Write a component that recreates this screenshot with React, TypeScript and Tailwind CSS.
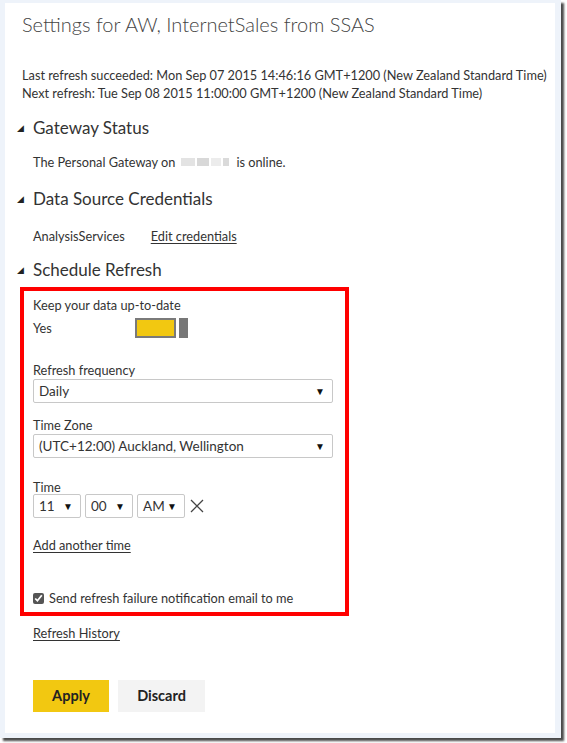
const FONT = { fontFamily: "Lato, 'Open Sans', sans-serif" };

function Heading({ children }: { children: React.ReactNode }) {
  return (
    <div className="ml-[-5px] flex items-center text-[17px] leading-[22px] text-[#333]">
      <span className="w-[16px] text-[9px] text-[#222]">◢</span>
      {children}
    </div>
  );
}

function Select({ value, className }: { value: string; className: string }) {
  return (
    <div className={`flex h-[24px] items-center justify-between rounded-[2px] border border-[#c8c8c8] bg-white pl-[5px] pr-[7px] text-[13.5px] text-[#333] ${className}`}>
      <span>{value}</span>
      <span className="text-[10px] text-[#111]">▼</span>
    </div>
  );
}

export default function App() {
  return (
    <div className="h-[743px] w-[567px] bg-white" style={FONT}>
      <div className="h-[738px] w-[561px] bg-[#eef3fa] pb-[5px] pl-[5px] pr-[6px] pt-[3px] shadow-[3px_3px_2px_#4a4a4a]">
        <div className="h-full bg-white pl-[17px] pt-[8px] text-[12.75px] text-[#333]">
          <h1 className="text-[20px] font-light leading-[26px] text-[#444]">
            Settings for AW, InternetSales from SSAS
          </h1>

          <div className="mt-[29px] leading-[18px]">
            <div>Last refresh succeeded: Mon Sep 07 2015 14:46:16 GMT+1200 (New Zealand Standard Time)</div>
            <div>Next refresh: Tue Sep 08 2015 11:00:00 GMT+1200 (New Zealand Standard Time)</div>
          </div>

          <div className="mt-[15px]">
            <Heading>Gateway Status</Heading>
          </div>
          <div className="mt-[14px] flex items-center pl-[11px] leading-[18px]">
            The Personal Gateway on
            <span className="ml-[6px] mr-[5px] inline-flex h-[8px] w-[50px] gap-[2px]">
              <span className="w-[14px] bg-[#e3e3e3]" />
              <span className="w-[12px] bg-[#d8d8d8]" />
              <span className="w-[10px] bg-[#ececec]" />
              <span className="w-[6px] bg-[#dadada]" />
            </span>
            is online.
          </div>

          <div className="mt-[17px]">
            <Heading>Data Source Credentials</Heading>
          </div>
          <div className="mt-[17px] flex gap-[26px] pl-[11px] leading-[18px]">
            <span>AnalysisServices</span>
            <span className="underline underline-offset-2">Edit credentials</span>
          </div>

          <div className="mt-[14px]">
            <Heading>Schedule Refresh</Heading>
          </div>

          <div className="ml-[-2px] mt-[6px] w-[329px] border-[4px] border-[#ff0000] pb-[5px] pl-[9px] pt-[5px]">
            <div className="leading-[18px]">Keep your data up-to-date</div>
            <div className="mt-[4px] flex items-center leading-[18px]">
              <span className="w-[102px]">Yes</span>
              <span className="flex items-center gap-[3px]">
                <span className="h-[20px] w-[41px] border-[2px] border-[#7a7a7a] bg-[#f2c811]" />
                <span className="h-[20px] w-[9px] bg-[#777]" />
              </span>
            </div>

            <div className="mt-[23px] leading-[18px]">Refresh frequency</div>
            <Select value="Daily" className="w-[300px]" />

            <div className="mt-[14px] leading-[17px]">Time Zone</div>
            <Select value="(UTC+12:00) Auckland, Wellington" className="w-[300px]" />

            <div className="mt-[22px] leading-[14px]">Time</div>
            <div className="flex items-center gap-[4px]">
              <Select value="11" className="w-[48px]" />
              <Select value="00" className="w-[48px]" />
              <Select value="AM" className="w-[48px]" />
              <svg width="14" height="14" viewBox="0 0 14 14" className="ml-[1px]">
                <path d="M1 1L13 13M13 1L1 13" stroke="#444" strokeWidth="1.3" />
              </svg>
            </div>

            <div className="mt-[18px] leading-[18px] underline underline-offset-2">Add another time</div>

            <div className="mt-[35px] flex items-center gap-[5px] leading-[18px]">
              <input type="checkbox" defaultChecked className="h-[11px] w-[11px] accent-[#555]" />
              <span>Send refresh failure notification email to me</span>
            </div>
          </div>

          <div className="mt-[8px] pl-[11px] leading-[18px] underline underline-offset-2">Refresh History</div>

          <div className="mt-[38px] flex gap-[9px] pl-[11px]">
            <button className="h-[32px] w-[76px] bg-[#f2c811] text-[14.5px] font-bold text-[#222]">Apply</button>
            <button className="h-[32px] w-[87px] bg-[#f3f3f3] text-[14.5px] font-bold text-[#222]">Discard</button>
          </div>
        </div>
      </div>
    </div>
  );
}
